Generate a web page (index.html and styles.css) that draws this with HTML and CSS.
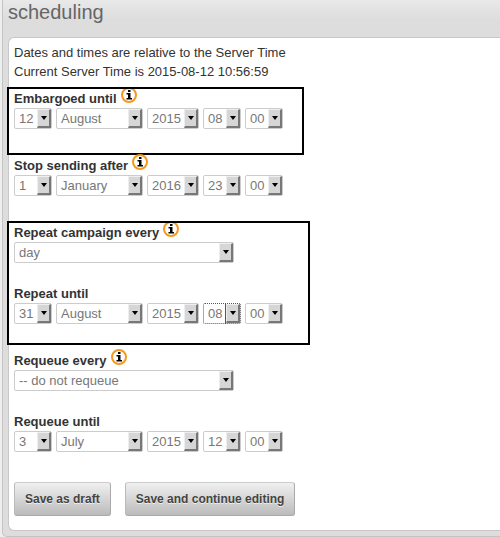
FILE: index.html
```html
<!DOCTYPE html>
<html lang="en">
    <head>
        <meta charset="UTF-8" />
        <title>scheduling</title>
        <link rel="stylesheet" href="styles.css">
    </head>
    <body>
        <svg class="defs" width="0" height="0">
            <symbol id="info" viewBox="0 0 16 16">
                <circle cx="8" cy="8" r="7" fill="#fff" stroke="#f7981d" stroke-width="2" />
                <path d="M7 3h2.500v2H7zM5.500 6h4v5h1.500v1.500H5.500V11H7V7.500H5.500z" fill="#000" />
            </symbol>
        </svg>
        <main class="content">
            <h1 class="title">scheduling</h1>
            <form class="panel">
                <p class="intro">Dates and times are relative to the Server Time<br />Current Server Time is 2015-08-12 10:56:59</p>

                <div class="marked embargo">
                    <div class="field">
                        <div class="label">
                            <label for="embargo-day">Embargoed until</label>
                            <a class="help" href="#embargo" aria-label="Help"><svg class="icon"><use href="#info" /></svg></a>
                        </div>
                        <div class="row">
                            <span class="select day"><select id="embargo-day"><option>12</option></select></span>
                            <span class="select month"><select aria-label="Month"><option>August</option></select></span>
                            <span class="select year"><select aria-label="Year"><option>2015</option></select></span>
                            <span class="select hour"><select aria-label="Hour"><option>08</option></select></span>
                            <span class="select minute"><select aria-label="Minute"><option>00</option></select></span>
                        </div>
                    </div>
                </div>

                <div class="field finish">
                    <div class="label">
                        <label for="finish-day">Stop sending after</label>
                        <a class="help" href="#finish" aria-label="Help"><svg class="icon"><use href="#info" /></svg></a>
                    </div>
                    <div class="row">
                        <span class="select day"><select id="finish-day"><option>1</option></select></span>
                        <span class="select month"><select aria-label="Month"><option>January</option></select></span>
                        <span class="select year"><select aria-label="Year"><option>2016</option></select></span>
                        <span class="select hour"><select aria-label="Hour"><option>23</option></select></span>
                        <span class="select minute"><select aria-label="Minute"><option>00</option></select></span>
                    </div>
                </div>

                <div class="marked repeat">
                    <div class="field">
                        <div class="label">
                            <label for="repeat-interval">Repeat campaign every</label>
                            <a class="help" href="#repeat" aria-label="Help"><svg class="icon"><use href="#info" /></svg></a>
                        </div>
                        <div class="row">
                            <span class="select interval"><select id="repeat-interval"><option>day</option></select></span>
                        </div>
                    </div>
                    <div class="field">
                        <div class="label"><label for="repeat-day">Repeat until</label></div>
                        <div class="row">
                            <span class="select day"><select id="repeat-day"><option>31</option></select></span>
                            <span class="select month"><select aria-label="Month"><option>August</option></select></span>
                            <span class="select year"><select aria-label="Year"><option>2015</option></select></span>
                            <span class="select hour active"><select aria-label="Hour"><option>08</option></select></span>
                            <span class="select minute"><select aria-label="Minute"><option>00</option></select></span>
                        </div>
                    </div>
                </div>

                <div class="requeue">
                    <div class="field">
                        <div class="label">
                            <label for="requeue-interval">Requeue every</label>
                            <a class="help" href="#requeue" aria-label="Help"><svg class="icon"><use href="#info" /></svg></a>
                        </div>
                        <div class="row">
                            <span class="select interval"><select id="requeue-interval"><option>-- do not requeue</option></select></span>
                        </div>
                    </div>
                    <div class="field">
                        <div class="label"><label for="requeue-day">Requeue until</label></div>
                        <div class="row">
                            <span class="select day"><select id="requeue-day"><option>3</option></select></span>
                            <span class="select month"><select aria-label="Month"><option>July</option></select></span>
                            <span class="select year"><select aria-label="Year"><option>2015</option></select></span>
                            <span class="select hour"><select aria-label="Hour"><option>12</option></select></span>
                            <span class="select minute"><select aria-label="Minute"><option>00</option></select></span>
                        </div>
                    </div>
                </div>

                <div class="buttons">
                    <button type="submit">Save as draft</button>
                    <button type="submit">Save and continue editing</button>
                </div>
            </form>
        </main>
    </body>
</html>
```
FILE: styles.css
```css
*,
*::before,
*::after {
    box-sizing: border-box;
}
body {
    margin: 0;
    background: #eee;
    color: #333;
    font: 13px/19px "Liberation Sans", Arial, sans-serif;
}
.defs {
    position: absolute;
}
.content {
    margin-left: 2px;
    padding: 0 0 5px 5px;
    border: solid #c4c4c4;
    border-width: 0 0 1px 1px;
    border-radius: 0 0 0 5px;
    background: linear-gradient(#e9e9e9, #ddd 20px);
}
.title {
    margin: 0;
    padding-bottom: 13px;
    color: #666;
    font-size: 20px;
    font-weight: normal;
    line-height: 24px;
}
.panel {
    padding: 5px 5px 14px;
    border: solid #c8c8c8;
    border-width: 1px 0 1px 1px;
    border-radius: 6px 0 0 6px;
    background: #fff;
}
.intro {
    margin: 0 0 6px;
}

/* outlined groups */
.marked {
    width: fit-content;
    margin-left: -7px;
    border: 2px solid #000;
    overflow: hidden;
}
.embargo {
    margin-bottom: 1px;
    padding: 0 19px 24px 5px;
}
.finish {
    margin-bottom: 25px;
}
.repeat {
    margin-bottom: 6px;
    padding: 0 25px 19px 5px;
}
.field + .field {
    margin-top: 21px;
}

.label {
    display: flex;
    align-items: flex-start;
    gap: 4px;
    height: 19px;
    font-weight: bold;
}
.help {
    margin-top: -2px;
}
.icon {
    display: block;
    width: 16px;
    height: 16px;
}
.row {
    display: flex;
    gap: 4px;
}

.select {
    position: relative;
    height: 21px;
}
.select select {
    appearance: none;
    display: block;
    width: 100%;
    height: 100%;
    margin: 0;
    padding: 0 14px 0 4px;
    border: 1px solid #ccc;
    border-radius: 2px;
    background: #fff;
    color: #777;
    font: inherit;
}
/* bevelled drop-down button */
.select::before {
    content: "";
    position: absolute;
    top: 1px;
    right: 1px;
    bottom: 1px;
    width: 14px;
    border: solid;
    border-width: 1px 2px 2px 1px;
    border-color: #eee #777 #777 #eee;
    background: #d6d6d6;
    pointer-events: none;
}
.select::after {
    content: "";
    position: absolute;
    top: 8px;
    right: 5px;
    border: 3px solid transparent;
    border-top: 4px solid #000;
    border-bottom: 0;
    pointer-events: none;
}
.day,
.hour,
.minute {
    width: 38px;
}
.month {
    width: 87px;
}
.year {
    width: 52px;
}
.interval {
    width: 220px;
}
/* focus ring runs round the value only, not the arrow */
.active select {
    border: 1px dotted #555;
    background: linear-gradient(90deg, #555 1px, transparent 1px) 21px 0 / 1px 2px repeat-y #fff;
}

.buttons {
    display: flex;
    gap: 14px;
    margin-top: 30px;
}
.buttons button {
    height: 34px;
    padding: 0 10px;
    border: 1px solid #aaa;
    border-top-color: #ccc;
    border-left-color: #bbb;
    border-radius: 3px;
    background: linear-gradient(#f0f0f0, #bbb);
    color: #444;
    font: bold 12px "Liberation Sans", Arial, sans-serif;
    text-shadow: 0 1px 0 #eee;
}
```
